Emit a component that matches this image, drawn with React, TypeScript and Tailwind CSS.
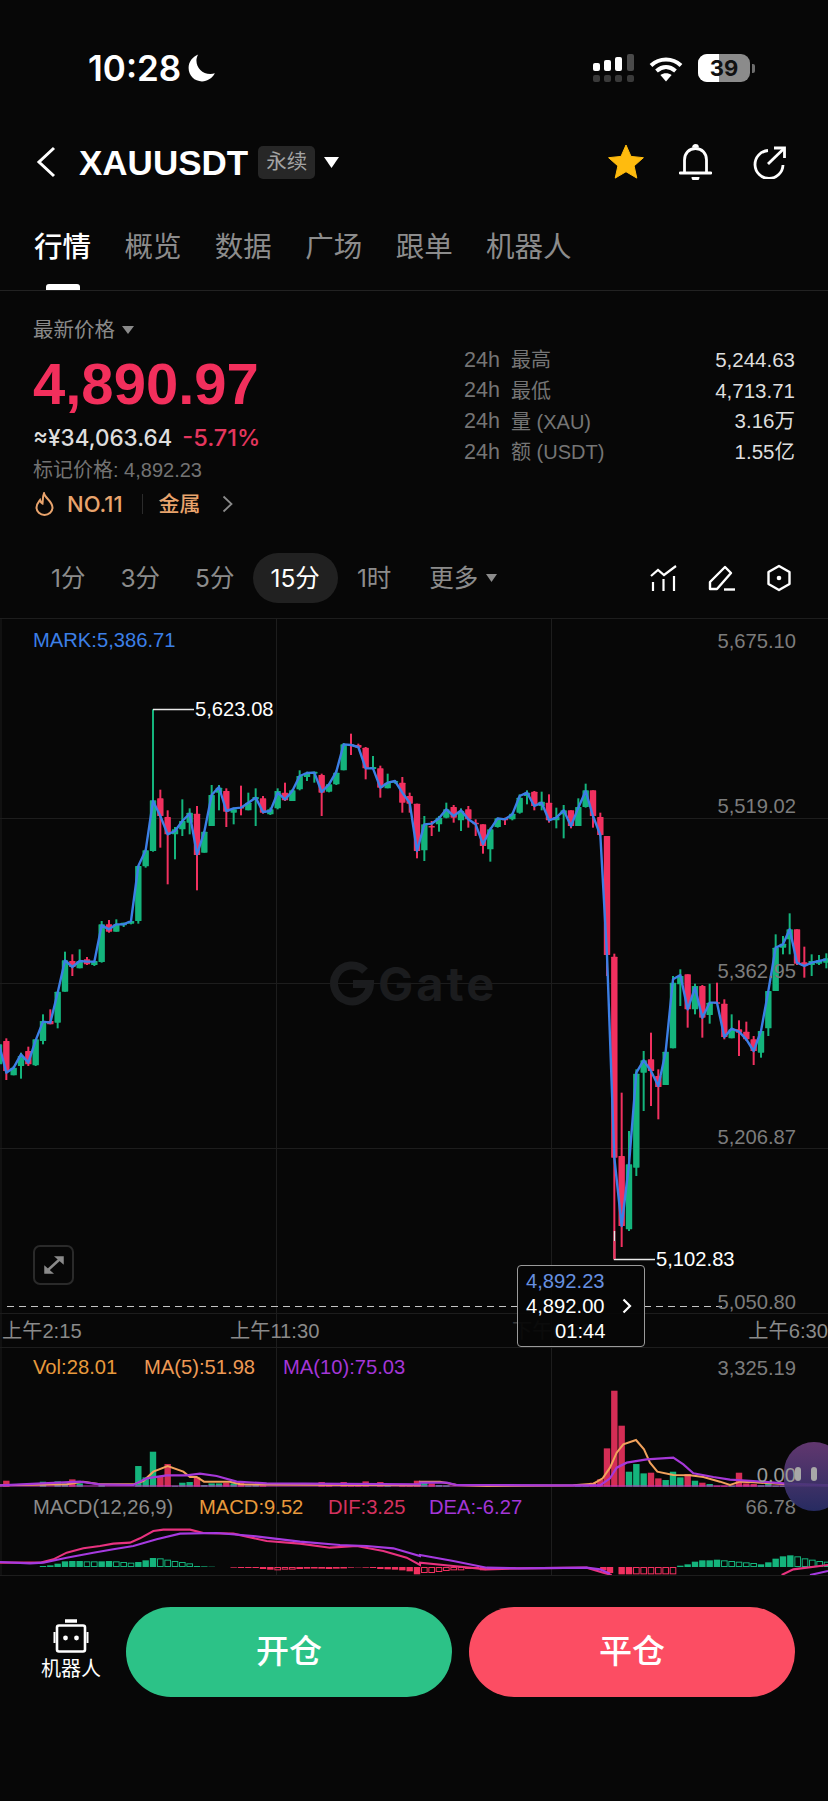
import React from "react";

type C = [number, number, number, number, number, 0 | 1, number];
// zoomX, bodyTop, bodyBottom, wickTop, wickBottom, red?, ma
const A: C[] = [
  [-3,1090,1150,1085,1155,0,1090],[19,1080,1170,1072,1197,1,1175],[41,1160,1183,1155,1183,0,1160],[63,1125,1155,1115,1193,0,1120],[85,1110,1150,1097,1155,1,1145],[107,1075,1153,1075,1155,0,1078],[129,1020,1080,1000,1090,0,1022],[151,1020,1030,985,1030,1,1025],[173,932,1025,932,1042,0,935],[195,838,932,812,932,0,838],[217,840,858,820,885,1,858],[239,840,862,805,862,0,840],[261,835,850,828,852,1,842],[283,840,852,840,855,0,842],[305,730,843,720,845,0,733],[327,730,752,717,755,1,745],[349,730,752,715,752,0,730],[371,725,733,725,738,0,730],[393,720,728,716,730,0,720],[415,555,720,555,728,0,555],[437,508,556,505,560,0,508],[459,358,510,85,512,0,360],[481,352,405,326,500,1,405],[503,408,460,388,610,1,460],[525,445,460,438,535,0,450],[547,420,445,355,465,0,420],[569,395,425,382,460,0,398],[591,398,522,375,628,1,520],[613,452,515,452,515,0,452],[635,342,435,312,435,0,342],[657,320,335,312,388,0,318],[679,330,392,322,438,1,390],[701,385,395,380,430,0,382],[723,378,382,314,403,1,380],[745,365,388,335,388,0,365],[767,348,355,322,435,0,350],[789,352,395,345,398,1,393],[811,385,400,380,402,0,390],[833,330,382,322,385,0,335],[855,335,358,305,360,1,355],[877,328,360,325,360,0,330],[899,285,325,268,328,0,285],[921,275,288,272,300,0,276],[943,272,278,272,305,0,275],[965,282,335,278,405,1,333],[987,310,332,308,334,0,310],[1009,275,310,268,312,0,272],[1031,190,268,186,268,0,190],[1053,190,194,158,222,1,192],[1075,192,200,188,202,1,198],[1097,200,262,198,295,1,262],[1119,258,264,225,265,0,262],[1141,262,320,254,350,1,320],[1163,305,322,278,322,0,305],[1185,300,305,298,308,0,300],[1207,305,365,288,395,1,335],[1229,345,368,335,395,1,365],[1251,368,510,368,532,1,510],
];
const B: C[] = [
  [13,190,268,165,300,0,190],[35,195,198,180,225,1,188],[57,170,190,165,212,0,172],[79,145,170,125,172,0,145],[101,138,170,132,185,1,165],[123,150,178,142,210,0,148],[145,145,175,135,200,1,175],[167,185,190,175,225,1,190],[189,190,255,190,278,1,250],[211,205,265,200,302,0,205],[233,172,198,170,200,0,172],[255,172,178,170,192,1,175],[277,158,175,155,178,0,160],[299,110,155,100,158,0,105],[321,95,105,88,130,0,95],[343,92,135,90,148,1,135],[365,122,135,92,148,0,125],[387,125,178,100,185,1,178],[409,168,178,140,202,0,170],[431,148,160,132,232,0,148],[453,148,195,148,202,1,195],[475,138,195,112,195,0,140],[497,88,138,68,140,0,90],[519,88,165,88,200,1,165],[541,168,222,155,225,1,222],[561,225,582,225,645,1,582],[583,587,1190,578,1495,1,1190],[605,1185,1395,995,1458,1,1395],[627,1210,1405,1110,1410,0,1210],[649,938,1220,925,1245,0,935],[671,898,935,870,1050,0,898],[693,895,930,815,1035,1,930],[715,945,978,925,1075,1,975],[737,872,972,872,972,0,872],[759,665,862,645,862,0,655],[781,645,670,625,735,0,642],[803,640,745,640,800,1,745],[825,675,745,668,760,0,680],[847,675,770,672,830,1,770],[869,725,762,668,788,0,725],[891,724,726,665,726,1,725],[913,728,828,715,835,1,828],[935,805,832,760,832,0,803],[957,805,815,778,885,1,812],[979,812,835,782,840,1,835],[1001,835,870,825,912,1,870],[1023,810,875,810,890,0,810],[1045,690,802,690,825,0,690],[1067,560,690,520,690,0,560],[1089,548,560,525,580,0,550],[1109,505,535,457,580,0,505],[1131,505,608,505,612,1,605],[1153,604,615,557,650,1,615],[1175,600,612,580,645,0,605],[1197,598,608,582,612,0,600],[1219,592,605,577,622,0,595],
];
const ax = (x: number) => x / 3;
const ay = (y: number) => 680 + y / 3;
const bx = (x: number) => 420 + x / 3;
const by = (y: number) => 760 + y / 3;
const candles = [
  ...A.map((c) => ({ x: ax(c[0]), t: ay(c[1]), b: ay(c[2]), wt: ay(c[3]), wb: ay(c[4]), r: c[5], m: ay(c[6]) })),
  ...B.map((c) => ({ x: bx(c[0]), t: by(c[1]), b: by(c[2]), wt: by(c[3]), wb: by(c[4]), r: c[5], m: by(c[6]) })),
];
const GREEN = "#14b47c";
const RED = "#f1305f";

const volA: [number, 0 | 1, number][] = [[19,1,18],[129,0,15],[173,0,16],[195,0,10],[217,1,22],[239,0,10],[305,0,6],[415,0,62],[437,0,28],[459,0,105],[481,1,32],[503,1,68],[525,0,3],[547,0,12],[569,0,14],[591,1,28],[613,0,5],[635,0,10],[657,0,10],[679,1,12],[701,0,10],[723,1,14],[745,0,4],[767,0,8],[789,1,4],[965,1,14],[987,1,6],[1031,1,14],[1053,1,8],[1075,1,10],[1097,1,16],[1141,1,14],[1163,0,4],[1207,1,4],[1229,1,6],[1251,1,18]];
const volB: [number, 0 | 1, number][] = [[13,0,14],[35,1,10],[57,0,5],[79,0,4],[475,0,4],[497,0,4],[519,1,12],[541,1,22],[561,1,115],[583,1,288],[605,1,183],[627,0,45],[649,0,68],[671,0,40],[693,1,42],[715,1,25],[737,0,20],[759,0,45],[781,0,28],[803,1,38],[825,0,18],[847,1,12],[869,0,8],[891,1,3],[913,1,3],[935,0,3],[957,1,42],[979,1,10],[1001,1,8],[1023,0,4],[1045,0,8],[1067,0,3],[1089,0,3]];
const VB = 1485.7;

const pts = (o: [number, number][], X: number, Y: number) => o.map(([x, y]) => `${X + x / 3},${Y + y / 3}`).join(" ");
const ma5 = pts([[0,733],[200,730],[250,722],[300,730],[400,730],[430,720],[460,692],[503,675],[550,692],[570,708],[590,708],[612,722],[690,722],[720,730],[1260,733]],0,1240) + " " + pts([[0,722],[60,722],[110,732],[200,735],[460,733],[520,728],[548,712],[570,680],[590,635],[610,610],[648,597],[672,625],[690,665],[712,692],[760,702],[810,703],[850,708],[900,722],[930,732],[960,722],[1000,724],[1100,730],[1224,733]],420,1240);
const ma10 = pts([[0,733],[240,722],[300,730],[400,732],[440,712],[500,703],[560,703],[600,698],[650,705],[710,722],[800,727],[1260,730]],0,1240) + " " + pts([[0,725],[80,725],[110,732],[400,733],[540,733],[570,712],[590,680],[620,665],[680,655],[760,650],[790,670],[820,697],[880,708],[930,716],[1000,720],[1100,728],[1224,733]],420,1240);
const dif = pts([[0,965],[120,965],[160,955],[200,935],[250,922],[300,915],[340,908],[390,905],[420,892],[460,870],[490,866],[570,866],[610,876],[700,878],[800,900],[900,908],[990,920],[1070,915],[1150,930],[1220,950],[1260,972]],0,1240) + " " + pts([[0,965],[100,975],[200,985],[300,982],[500,980],[550,995],[575,1002]],420,1240);
const dif2 = pts([[1085,1002],[1120,985],[1224,972]],420,1240);
const dea = pts([[0,963],[90,967],[130,965],[200,950],[280,935],[340,925],[400,915],[470,895],[540,878],[650,876],[760,885],[900,902],[1020,912],[1100,915],[1180,922],[1260,945]],0,1240) + " " + pts([[0,942],[100,960],[200,980],[300,982],[500,980],[540,985],[570,998]],420,1240);
const dea2 = pts([[1170,1002],[1224,990]],420,1240);

// x, height, hollow, in zoom units; positive = up (green), negative = down (red)
const macdA: [number, number, 0 | 1][] = [[129,3,0],[151,5,0],[173,10,0],[195,17,0],[217,18,0],[239,18,0],[261,17,1],[283,17,1],[305,17,0],[327,18,0],[349,17,1],[371,15,1],[393,13,1],[415,15,0],[437,20,0],[459,27,0],[481,26,1],[503,22,1],[525,18,1],[547,15,1],[569,11,1],[591,3,0],[613,2,0],[635,1,0],[701,-2,0],[723,-3,0],[745,-3,0],[767,-3,0],[789,-6,0],[811,-8,0],[833,-10,1],[855,-8,1],[877,-8,1],[899,-6,1],[921,-5,1],[943,-4,1],[965,-5,1],[987,-6,1],[1009,-5,1],[1031,-3,1],[1053,-2,0],[1075,-1,0],[1097,-2,0],[1119,-3,0],[1141,-6,0],[1163,-7,0],[1185,-8,0],[1207,-10,0],[1229,-13,0],[1251,-22,0]];
const macdB: [number, number, 0 | 1][] = [[13,-18,1],[35,-18,1],[57,-15,1],[79,-12,1],[101,-10,1],[123,-10,1],[145,-6,1],[167,-6,1],[189,-10,0],[211,-8,0],[233,-8,0],[255,-6,0],[277,-3,0],[550,-10,0],[570,-18,0],[605,-22,0],[627,-22,0],[649,-22,1],[671,-22,1],[693,-22,1],[715,-22,1],[737,-22,1],[759,-22,1],[781,4,0],[803,8,0],[825,16,0],[847,20,0],[869,20,0],[891,22,0],[913,20,1],[935,18,1],[957,16,1],[979,14,1],[1001,12,1],[1023,8,0],[1045,14,0],[1067,25,0],[1089,32,0],[1111,35,0],[1133,32,1],[1155,26,1],[1177,22,1],[1199,18,1],[1221,16,1]];
const MB = 1240 + 978 / 3;

function ChartDrawing() {
  const macd = [
    ...macdA.map((m) => ({ x: m[0] / 3, h: m[1] / 3, o: m[2] })),
    ...macdB.map((m) => ({ x: 420 + m[0] / 3, h: m[1] / 3, o: m[2] })),
  ];
  const vols = [
    ...volA.map((v) => ({ x: v[0] / 3, r: v[1], h: v[2] / 3 })),
    ...volB.map((v) => ({ x: 420 + v[0] / 3, r: v[1], h: v[2] / 3 })),
  ];
  return (
    <svg className="absolute inset-0" width="828" height="957" viewBox="0 618 828 957" fill="none">
      {[817, 982, 1147, 1312, 1346, 1574].map((y) => (
        <line key={y} x1="0" x2="828" y1={y + 0.5} y2={y + 0.5} stroke="#1d1d1d" />
      ))}
      {[1, 276.5, 551.5].map((x) => (
        <line key={x} x1={x} x2={x} y1="618" y2="1574" stroke="#1d1d1d" />
      ))}
      {/* watermark */}
      <path d="M365 970a18 18 0 1 0 5 13h-17" stroke="#1b1c1e" strokeWidth="8" />
      {candles.map((c, i) => (
        <g key={i} fill={c.r ? RED : GREEN}>
          <rect x={c.x - 1} y={c.wt} width="2" height={Math.max(c.wb - c.wt, 1)} />
          <rect x={c.x - 3.2} y={c.t} width="6.4" height={Math.max(c.b - c.t, 1.5)} rx="0.6" />
        </g>
      ))}
      <polyline points={candles.map((c) => `${c.x},${c.m}`).join(" ")} stroke="#3c7fe6" strokeWidth="2.400" strokeLinejoin="round" />
      <path d="M153 708.500H194" stroke="#e8e8e8" strokeWidth="1.400" />
      <path d="M614.500 1230V1258.500H655" stroke="#e8e8e8" strokeWidth="1.400" />
      <path d="M614.500 1240V1258" stroke={RED} strokeWidth="1.800" />
      <path d="M7 1305.500H517M644 1305.500H722" stroke="#c4c4c4" strokeWidth="1.200" strokeDasharray="7 5" />
      {vols.map((v, i) => (
        <rect key={i} x={v.x - 3.2} y={VB - v.h} width="6.4" height={v.h} fill={v.r ? "#d42d55" : GREEN} />
      ))}
      <line x1="0" x2="828" y1="1485" y2="1485" stroke="#c338c0" strokeWidth="1.500" opacity="0.7" />
      <polyline points={ma5} stroke="#f2a25c" strokeWidth="2" />
      <polyline points={ma10} stroke="#a638d8" strokeWidth="2.200" />
      <clipPath id="macd-clip"><rect x="0" y="1510" width="828" height="64" /></clipPath>
      <g clipPath="url(#macd-clip)">
        {macd.map((m, i) => {
          const col = m.h > 0 ? GREEN : RED;
          const y = m.h > 0 ? MB - m.h : MB;
          const h = Math.abs(m.h);
          return m.o ? (
            <rect key={i} x={m.x - 2.8} y={y + 0.5} width="5.6" height={Math.max(h - 1, 0.5)} stroke={col} strokeWidth="1" />
          ) : (
            <rect key={i} x={m.x - 3.2} y={y} width="6.4" height={h} fill={col} />
          );
        })}
        <polyline points={dif} stroke="#e8327f" strokeWidth="2.100" />
        <polyline points={dif2} stroke="#e8327f" strokeWidth="2.100" />
        <polyline points={dea} stroke="#a63ae0" strokeWidth="2.100" />
        <polyline points={dea2} stroke="#a63ae0" strokeWidth="2.100" />
      </g>
    </svg>
  );
}

function Signal() {
  return (
    <svg width="41" height="28" viewBox="0 0 41 28" fill="#fff">
      <rect x="0" y="9" width="7" height="8" rx="2" />
      <rect x="11" y="6" width="7" height="11" rx="2" />
      <rect x="22" y="3" width="7" height="14" rx="2" />
      <rect x="34" y="0" width="7" height="17" rx="2" fill="#4a4a4a" />
      {[0, 11, 22, 34].map((x) => (
        <rect key={x} x={x} y="21" width="7" height="7" rx="2" fill="#3a3a3a" />
      ))}
    </svg>
  );
}

function Wifi() {
  return (
    <svg width="34" height="27" viewBox="0 0 34 27" fill="none" stroke="#fff" strokeWidth="4">
      <path d="M2 10.500C10.500 2.500 23.500 2.500 32 10.500" />
      <path d="M7.500 16C13.500 10.800 20.500 10.800 26.500 16" />
      <path d="M17 26.500l-5.600-6.400c3.200-2.400 8-2.400 11.200 0z" fill="#fff" stroke="none" />
    </svg>
  );
}

function App() {
  const tabs = ["概览", "数据", "广场", "跟单", "机器人"];
  const stats = [
    ["24h", "最高", "5,244.63"],
    ["24h", "最低", "4,713.71"],
    ["24h", "量 (XAU)", "3.16万"],
    ["24h", "额 (USDT)", "1.55亿"],
  ];
  return (
    <div className="w-[828px] h-[1801px] overflow-hidden bg-[#070707] text-white font-['Inter','Noto_Sans_CJK_SC',sans-serif]">
      {/* status */}
      <div className="h-[136px] flex items-center pl-[88px] pr-[73px]">
        <span className="text-[35px] font-semibold leading-none">10:28</span>
        <svg className="ml-[6px]" width="30" height="30" viewBox="0 0 28 28" fill="#fff">
          <path d="M10.500 1.500C5 3.500 1.500 8.500 1.500 14c0 7 5.500 12.500 12.500 12.500 5 0 9.800-3 12-7.500-1.200.5-2.800.7-4.200.7-7.500 0-13-5.500-13-12.600 0-1.900.6-4 1.700-5.600z" />
        </svg>
        <div className="ml-auto flex items-center">
          <Signal />
          <div className="ml-[15px]"><Wifi /></div>
          <div className="ml-[15px] relative w-[52px] h-[28px] rounded-[9px] overflow-hidden flex bg-[#8b8b8b]">
            <div className="w-[21px] bg-white" />
            <span className="absolute inset-0 flex items-center justify-center text-[#111] text-[22px] font-bold leading-none">39</span>
          </div>
          <div className="ml-[2px] w-[3px] h-[9px] rounded-r-[2px] bg-[#6d6d6d]" />
        </div>
      </div>
      {/* header */}
      <div className="h-[52px] flex items-center pl-[36px]">
        <svg width="20" height="32" viewBox="0 0 20 32" fill="none" stroke="#fff" strokeWidth="3">
          <path d="M18 2L3 16l15 14" />
        </svg>
        <span className="ml-[23px] text-[35px] font-semibold leading-none font-['Liberation_Sans','Noto_Sans_CJK_SC',sans-serif]">XAUUSDT</span>
        <span className="ml-[10px] w-[57px] h-[33px] rounded-[5px] bg-[#272727] text-[#a3a3a3] text-[20.500px] flex items-center justify-center leading-none">永续</span>
        <svg className="ml-[9px]" width="15" height="11" viewBox="0 0 15 11" fill="#fff"><path d="M0 0h15L7.500 11z" /></svg>
        <div className="ml-auto mr-[42px] flex items-center">
          <svg width="36" height="34" viewBox="0 0 36 34" fill="#ffbb0e">
            <path d="M18 0l5 11.400 12.400 1.300-9.300 8.200 2.700 12.200L18 26.700l-10.800 6.400 2.700-12.200L.6 12.700 13 11.400z" stroke="#ffbb0e" strokeLinejoin="round" />
          </svg>
          <svg className="ml-[35px]" width="33" height="36" viewBox="0 0 33 36" fill="none" stroke="#fff" strokeWidth="2.800">
            <path d="M1 29h31" strokeLinecap="round" />
            <path d="M5.500 29V16c0-6.500 4.500-11.500 11-11.500S27.500 9.500 27.500 16v13" />
            <path d="M14.500 3.500a2 2 0 0 1 4 0" />
            <path d="M12.500 33h8a4 4 0 0 1-8 0z" fill="#fff" stroke="none" />
          </svg>
          <svg className="ml-[41px]" width="33" height="33" viewBox="0 0 33 33" fill="none" stroke="#fff" strokeWidth="2.800">
            <path d="M15 4.500A14 14 0 1 0 30 19" />
            <path d="M15 18L31 2.500" />
            <path d="M21 2h10.500v10" />
          </svg>
        </div>
      </div>
      {/* tabs */}
      <div className="h-[103px] border-b border-[#222] flex gap-[33.400px] pl-[34px] pt-[39px] text-[28.500px]">
        <div className="flex flex-col">
          <span className="h-[40px] leading-[40px] font-medium">行情</span>
          <div className="mt-[17px] mx-auto w-[34px] h-[7px] rounded-t-[3px] bg-white" />
        </div>
        {tabs.map((t) => (
          <span key={t} className="h-[40px] leading-[40px] text-[#8c8c8c]">{t}</span>
        ))}
      </div>
      {/* price */}
      <div className="h-[262px] flex pl-[33px] pr-[32px]">
        <div className="w-[431px] pt-[27px]">
          <div className="h-[24px] flex items-center text-[20.500px] text-[#8a8a8a] leading-none">
            最新价格
            <svg className="ml-[7px]" width="12" height="8" viewBox="0 0 12 8" fill="#8a8a8a"><path d="M0 0h12L6 8z" /></svg>
          </div>
          <div className="mt-[12px] h-[60px] leading-[60px] text-[58px] font-bold text-[#f22f5c] font-['Liberation_Sans',sans-serif]">4,890.97</div>
          <div className="mt-[9px] h-[30px] flex items-center leading-none font-medium">
            <span className="text-[22.500px] text-[#dedede]">≈¥34,063.64</span>
            <span className="ml-[10px] text-[23.500px] text-[#e4365e]">-5.71%</span>
          </div>
          <div className="mt-[4px] h-[26px] leading-[26px] text-[20px] text-[#737373] font-['Liberation_Sans','Noto_Sans_CJK_SC',sans-serif]">标记价格: 4,892.23</div>
          <div className="mt-[7px] h-[28px] flex items-center text-[#e9a46d] font-medium">
            <svg className="ml-[2px]" width="19" height="24" viewBox="0 0 19 24" fill="none" stroke="#e9a46d" strokeWidth="2">
              <path d="M9 1.500C10 6 17.500 9.500 17.500 15.500A8 7.500 0 0 1 1.500 15.500C1.500 12 3.500 10 5 8c.5 2 1.500 3 2.500 3.500C8 8 7.500 5 9 1.500z" />
            </svg>
            <span className="ml-[13px] text-[22px]">NO.11</span>
            <div className="ml-[19px] w-[1px] h-[20px] bg-[#2b2b2b]" />
            <span className="ml-[16px] text-[21px]">金属</span>
            <svg className="ml-[21px]" width="11" height="18" viewBox="0 0 11 18" fill="none" stroke="#8a8a8a" strokeWidth="1.800"><path d="M1.500 1.500L9.500 9l-8 7.500" /></svg>
          </div>
        </div>
        <div className="w-[331px] pt-[54px] text-[20px] leading-none font-['Liberation_Sans','Noto_Sans_CJK_SC',sans-serif]">
          {stats.map((s) => (
            <div key={s[1]} className="h-[30.700px] flex items-center">
              <span className="w-[47px] text-[21.500px] text-[#757575]">{s[0]}</span>
              <span className="text-[#757575]">{s[1]}</span>
              <span className="ml-auto text-[20.500px] text-[#dedede]">{s[2]}</span>
            </div>
          ))}
        </div>
      </div>
      {/* intervals */}
      <div className="h-[50px] flex items-center gap-[1px] pl-[34px] pr-[36px] text-[24.500px] text-[#8c8c8c]">
        <span className="px-[17px]">1分</span>
        <span className="px-[17px]">3分</span>
        <span className="px-[17px]">5分</span>
        <span className="h-[50px] px-[18px] rounded-[25px] bg-[#212121] text-white flex items-center">15分</span>
        <span className="px-[18px]">1时</span>
        <span className="pl-[19px] flex items-center">
          更多
          <svg className="ml-[8px]" width="11" height="8" viewBox="0 0 11 8" fill="#8c8c8c"><path d="M0 0h11L5.500 8z" /></svg>
        </span>
        <div className="ml-auto flex items-center">
          <svg width="27" height="26" viewBox="0 0 27 26" fill="none" stroke="#fff" strokeWidth="2.200">
            <path d="M1 11l7-6 6 5L26 1" />
            <path d="M3 17v9M13.500 14v12M24 11v15" />
          </svg>
          <svg className="ml-[31px]" width="28" height="26" viewBox="0 0 28 26" fill="none" stroke="#fff" strokeWidth="2.400">
            <path d="M2 24V17L17 2l6 6L9 24z" strokeLinejoin="round" />
            <path d="M16 24.500h11" />
          </svg>
          <svg className="ml-[30px]" width="26" height="28" viewBox="0 0 26 28" fill="none" stroke="#fff" strokeWidth="2.400">
            <path d="M13 2l10.500 6v12L13 26 2.500 20V8z" strokeLinejoin="round" />
            <circle cx="13" cy="14" r="2.300" fill="#fff" stroke="none" />
          </svg>
        </div>
      </div>
      <div className="h-[15px]" />
      {/* chart */}
      <div className="relative h-[957px] border-t border-[#1d1d1d] text-[20.200px] leading-none text-[#7c7c7c] font-['Liberation_Sans','Noto_Sans_CJK_SC',sans-serif]">
        <ChartDrawing />
        <span className="absolute left-[378px] top-[364px] -translate-y-1/2 text-[47px] font-bold tracking-[3px] text-[#1b1c1e] font-['Inter',sans-serif]">Gate</span>
        <span className="absolute left-[33px] top-[21px] -translate-y-1/2 text-[#3c7fe6]">MARK:5,386.71</span>
        <span className="absolute right-[32px] top-[22px] -translate-y-1/2">5,675.10</span>
        <span className="absolute right-[32px] top-[187px] -translate-y-1/2">5,519.02</span>
        <span className="absolute right-[32px] top-[352px] -translate-y-1/2">5,362.95</span>
        <span className="absolute right-[32px] top-[518px] -translate-y-1/2">5,206.87</span>
        <span className="absolute right-[32px] top-[683px] -translate-y-1/2">5,050.80</span>
        <span className="absolute left-[195px] top-[90px] -translate-y-1/2 text-white">5,623.08</span>
        <span className="absolute left-[656px] top-[640px] -translate-y-1/2 text-white">5,102.83</span>
        <div className="absolute left-[33px] top-[626px] w-[41px] h-[40px] rounded-[7px] border-2 border-[#2a2a2a] flex items-center justify-center">
          <svg width="22" height="20" viewBox="0 0 22 20" fill="#8a8a8a" stroke="#8a8a8a" strokeWidth="1.500">
            <path d="M13 2h7v6zM2 18v-6l7 6z" />
            <path d="M17 4L5 15" fill="none" strokeWidth="2.500" />
          </svg>
        </div>
        <span className="absolute left-[2px] top-[712px] -translate-y-1/2 text-[#8a8a8a]">上午2:15</span>
        <span className="absolute left-[230px] top-[712px] -translate-y-1/2 text-[#8a8a8a]">上午11:30</span>
        <span className="absolute left-[512px] top-[712px] -translate-y-1/2 text-[#3a3a3a]">下午6:00</span>
        <span className="absolute right-0 top-[712px] -translate-y-1/2 text-[#8a8a8a]">上午6:30</span>
        <div className="absolute left-[517px] top-[646px] w-[128px] h-[82px] rounded-[4px] border border-[#9a9a9a] bg-[#070707]/90 flex flex-col pl-[8px] pr-[12px] py-[2px] text-white">
          <span className="h-[26px] flex items-center text-[#6690e0]">4,892.23</span>
          <span className="h-[26px] flex items-center justify-between">
            4,892.00
            <svg width="10" height="16" viewBox="0 0 10 16" fill="none" stroke="#fff" strokeWidth="2.200"><path d="M1.500 1.500L8 8l-6.500 6.500" /></svg>
          </span>
          <span className="h-[26px] flex items-center pl-[29px]">01:44</span>
        </div>
        <span className="absolute left-[33px] top-[748px] -translate-y-1/2 text-[#e89a3c]">Vol:28.01</span>
        <span className="absolute left-[144px] top-[748px] -translate-y-1/2 text-[#ee9a55]">MA(5):51.98</span>
        <span className="absolute left-[283px] top-[748px] -translate-y-1/2 text-[#a436d8]">MA(10):75.03</span>
        <span className="absolute right-[32px] top-[749px] -translate-y-1/2">3,325.19</span>
        <span className="absolute left-[33px] top-[888px] -translate-y-1/2 text-[#8a8a8a]">MACD(12,26,9)</span>
        <span className="absolute left-[199px] top-[888px] -translate-y-1/2 text-[#e89a3c]">MACD:9.52</span>
        <span className="absolute left-[328px] top-[888px] -translate-y-1/2 text-[#d4325f]">DIF:3.25</span>
        <span className="absolute left-[429px] top-[888px] -translate-y-1/2 text-[#a436d8]">DEA:-6.27</span>
        <span className="absolute right-[32px] top-[888px] -translate-y-1/2">66.78</span>
        <div className="absolute left-[784px] top-[823px] w-[60px] h-[69px] rounded-[30px] bg-gradient-to-b from-[#6b3c7a] to-[#2a2f6b] opacity-90" />
        <span className="absolute right-[32px] top-[856px] -translate-y-1/2 text-[#9a9a9a]">0.00</span>
        <div className="absolute left-[795px] top-[848px] w-[6px] h-[14px] rounded-[3px] bg-[#a8a8a8]" />
        <div className="absolute left-[811px] top-[848px] w-[6px] h-[14px] rounded-[3px] bg-[#a8a8a8]" />
      </div>
      {/* bottom */}
      <div className="pt-[32px] flex items-start pr-[33px]">
        <div className="w-[126px] h-[90px] flex flex-col items-center pt-[12px] pl-[16px]">
          <svg width="36" height="34" viewBox="0 0 36 34" fill="none" stroke="#fff" strokeWidth="2.600">
            <path d="M12 2h12" strokeWidth="3.500" />
            <rect x="4" y="6.500" width="28" height="26" rx="2" />
            <path d="M1.500 13v11M34.500 13v11" strokeWidth="2" />
            <circle cx="12.500" cy="19" r="2.400" fill="#fff" stroke="none" />
            <circle cx="23.500" cy="19" r="2.400" fill="#fff" stroke="none" />
          </svg>
          <span className="mt-[6px] text-[20px] leading-none">机器人</span>
        </div>
        <div className="flex-1 h-[90px] rounded-[45px] bg-[#2cc287] flex items-center justify-center text-[33px] font-medium">开仓</div>
        <div className="ml-[17px] flex-1 h-[90px] rounded-[45px] bg-[#fc4d63] flex items-center justify-center text-[33px] font-medium">平仓</div>
      </div>
    </div>
  );
}

export default App;
